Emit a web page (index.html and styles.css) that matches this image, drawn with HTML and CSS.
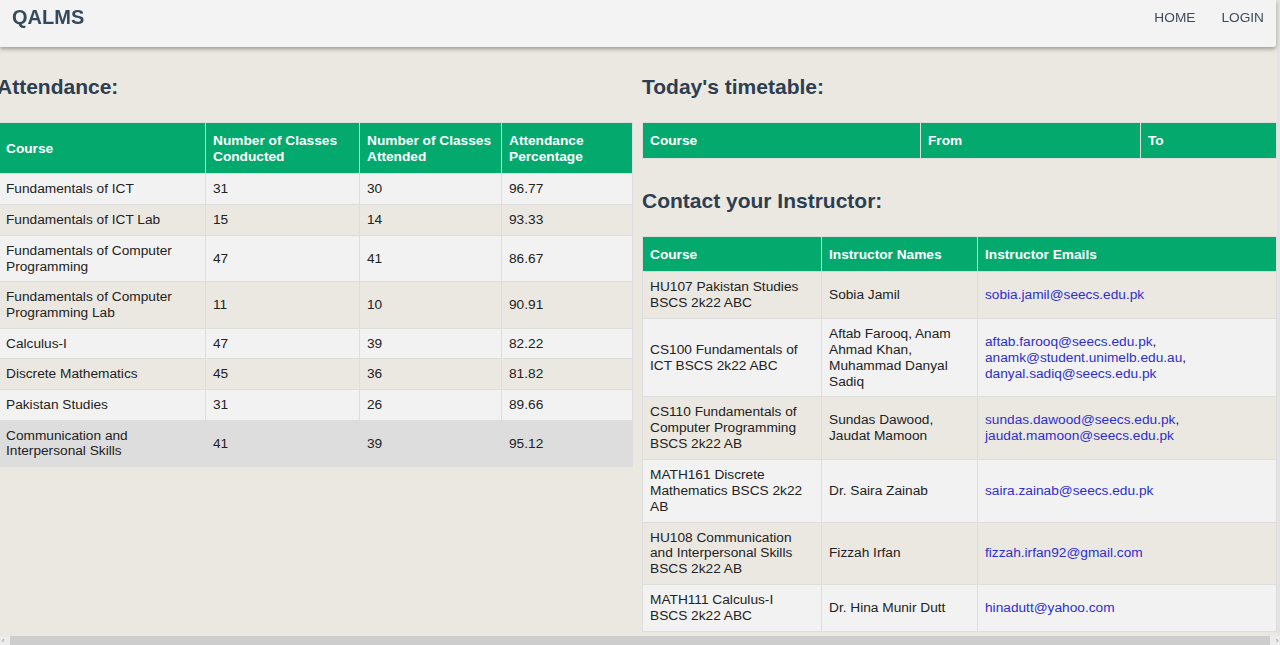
FILE: index.html
```html
<!DOCTYPE html>
<html lang="en">
<head>
<meta charset="utf-8">
<title>QALMS</title>
<link rel="stylesheet" href="styles.css">
</head>
<body>
<div class="page">
  <header class="navbar">
    <div class="logo">QALMS</div>
    <nav class="links">
      <a href="#" class="nav-link">HOME</a>
      <a href="#" class="nav-link">LOGIN</a>
    </nav>
  </header>

  <main class="main">
    <section class="col col-left">
      <h2 class="heading">Attendance:</h2>
      <table class="grid att">
        <thead>
          <tr>
            <th class="a1">Course</th>
            <th class="a2">Number of Classes Conducted</th>
            <th class="a3">Number of Classes Attended</th>
            <th class="a4">Attendance Percentage</th>
          </tr>
        </thead>
        <tbody>
          <tr class="light"><td>Fundamentals of ICT</td><td>31</td><td>30</td><td>96.77</td></tr>
          <tr><td>Fundamentals of ICT Lab</td><td>15</td><td>14</td><td>93.33</td></tr>
          <tr class="light"><td>Fundamentals of Computer Programming</td><td>47</td><td>41</td><td>86.67</td></tr>
          <tr><td>Fundamentals of Computer Programming Lab</td><td>11</td><td>10</td><td>90.91</td></tr>
          <tr class="light"><td>Calculus-I</td><td>47</td><td>39</td><td>82.22</td></tr>
          <tr><td>Discrete Mathematics</td><td>45</td><td>36</td><td>81.82</td></tr>
          <tr class="light"><td>Pakistan Studies</td><td>31</td><td>26</td><td>89.66</td></tr>
          <tr class="hover"><td>Communication and Interpersonal Skills</td><td>41</td><td>39</td><td>95.12</td></tr>
        </tbody>
      </table>
    </section>

    <section class="col col-right">
      <h2 class="heading">Today's timetable:</h2>
      <table class="grid tt">
        <thead>
          <tr>
            <th class="t1">Course</th>
            <th class="t2">From</th>
            <th class="t3">To</th>
          </tr>
        </thead>
      </table>

      <h2 class="heading heading-second">Contact your Instructor:</h2>
      <table class="grid contact">
        <thead>
          <tr>
            <th class="c1">Course</th>
            <th class="c2">Instructor Names</th>
            <th class="c3">Instructor Emails</th>
          </tr>
        </thead>
        <tbody>
          <tr><td>HU107 Pakistan Studies BSCS 2k22 ABC</td><td>Sobia Jamil</td><td><a class="mail" href="#">sobia.jamil@seecs.edu.pk</a></td></tr>
          <tr class="light"><td>CS100 Fundamentals of ICT BSCS 2k22 ABC</td><td>Aftab Farooq, Anam Ahmad Khan, Muhammad Danyal Sadiq</td><td><a class="mail" href="#">aftab.farooq@seecs.edu.pk</a>,<br><a class="mail" href="#">anamk@student.unimelb.edu.au</a>,<br><a class="mail" href="#">danyal.sadiq@seecs.edu.pk</a></td></tr>
          <tr><td>CS110 Fundamentals of Computer Programming BSCS 2k22 AB</td><td>Sundas Dawood, Jaudat Mamoon</td><td><a class="mail" href="#">sundas.dawood@seecs.edu.pk</a>,<br><a class="mail" href="#">jaudat.mamoon@seecs.edu.pk</a></td></tr>
          <tr class="light"><td>MATH161 Discrete Mathematics BSCS 2k22 AB</td><td>Dr. Saira Zainab</td><td><a class="mail" href="#">saira.zainab@seecs.edu.pk</a></td></tr>
          <tr><td>HU108 Communication and Interpersonal Skills BSCS 2k22 AB</td><td>Fizzah Irfan</td><td><a class="mail" href="#">fizzah.irfan92@gmail.com</a></td></tr>
          <tr class="light"><td>MATH111 Calculus-I BSCS 2k22 ABC</td><td>Dr. Hina Munir Dutt</td><td><a class="mail" href="#">hinadutt@yahoo.com</a></td></tr>
        </tbody>
      </table>
    </section>
  </main>
</div>

<div class="vscroll"></div>
<div class="hscroll">
  <span class="arrow">&#8249;</span>
  <div class="thumb"></div>
  <span class="arrow">&#8250;</span>
</div>
</body>
</html>
```

FILE: styles.css
```css
html, body {
  margin: 0;
  padding: 0;
  overflow: hidden;
}

body {
  background: #ebe8e2;
  font-family: "Liberation Sans", Arial, sans-serif;
  color: #222;
}

.page {
  width: 1276px;
}

.navbar {
  height: 47px;
  background: #f3f3f3;
  box-shadow: 0 2px 4px rgba(0, 0, 0, 0.35);
  border-bottom-right-radius: 3px;
  display: flex;
  justify-content: space-between;
  align-items: flex-start;
  padding: 0 12px;
  box-sizing: border-box;
  position: relative;
  z-index: 2;
}

.logo {
  font-size: 20px;
  font-weight: bold;
  color: #34495e;
  line-height: 20px;
  margin-top: 7px;
}

.links {
  display: flex;
  gap: 26px;
  margin-top: 10px;
}

.nav-link {
  font-size: 13.7px;
  line-height: 16px;
  color: #3d4b5c;
  text-decoration: none;
}

.main {
  display: flex;
  gap: 10px;
  margin-left: -2px;
  align-items: flex-start;
}

.col-left {
  width: 634px;
}

.col-right {
  width: 634px;
}

.heading {
  font-size: 21px;
  line-height: 22px;
  font-weight: bold;
  color: #2c3e50;
  margin: 29px 0 24px;
}

.col-left .heading {
  margin-left: -1px;
}

.heading-second {
  margin-top: 31px;
}

.grid {
  border-collapse: collapse;
  table-layout: fixed;
  font-size: 13.7px;
  line-height: 15.7px;
}

.grid th,
.grid td {
  border: 1px solid #ddd;
  text-align: left;
  vertical-align: middle;
  box-sizing: border-box;
}

.grid th {
  background: #04aa6d;
  color: #fff;
  font-weight: bold;
  padding: 10px 7px 9px 7px;
}

.grid td {
  padding: 7px;
  color: #222;
}

.grid .light td {
  background: #f2f2f2;
}

.grid .hover td {
  background: #ddd;
}

.att {
  width: 634px;
}

.att th.a1 { width: 207px; }
.att th.a2 { width: 154px; }
.att th.a3 { width: 142px; }
.att th.a4 { width: 131px; }

.tt {
  width: 634px;
}

.tt th.t1 { width: 278px; }
.tt th.t2 { width: 220px; }
.tt th.t3 { width: 136px; }

.contact {
  width: 634px;
}

.contact td {
  line-height: 15.85px;
}

.contact th.c1 { width: 179px; }
.contact th.c2 { width: 156px; }
.contact th.c3 { width: 299px; }

.mail {
  color: #2e2ed0;
  text-decoration: none;
}

.vscroll {
  position: fixed;
  top: 0;
  right: 0;
  width: 3px;
  height: 100%;
  background: #e3e3e3;
}

.hscroll {
  position: fixed;
  left: 0;
  bottom: 0;
  width: 1280px;
  height: 9px;
  background: #ececec;
  display: flex;
  align-items: center;
  z-index: 5;
}

.thumb {
  flex: 1;
  height: 9px;
  background: #cdcdcd;
  margin: 0 4px;
}

.arrow {
  width: 6px;
  font-size: 8px;
  line-height: 9px;
  color: #888;
  text-align: center;
}
```
